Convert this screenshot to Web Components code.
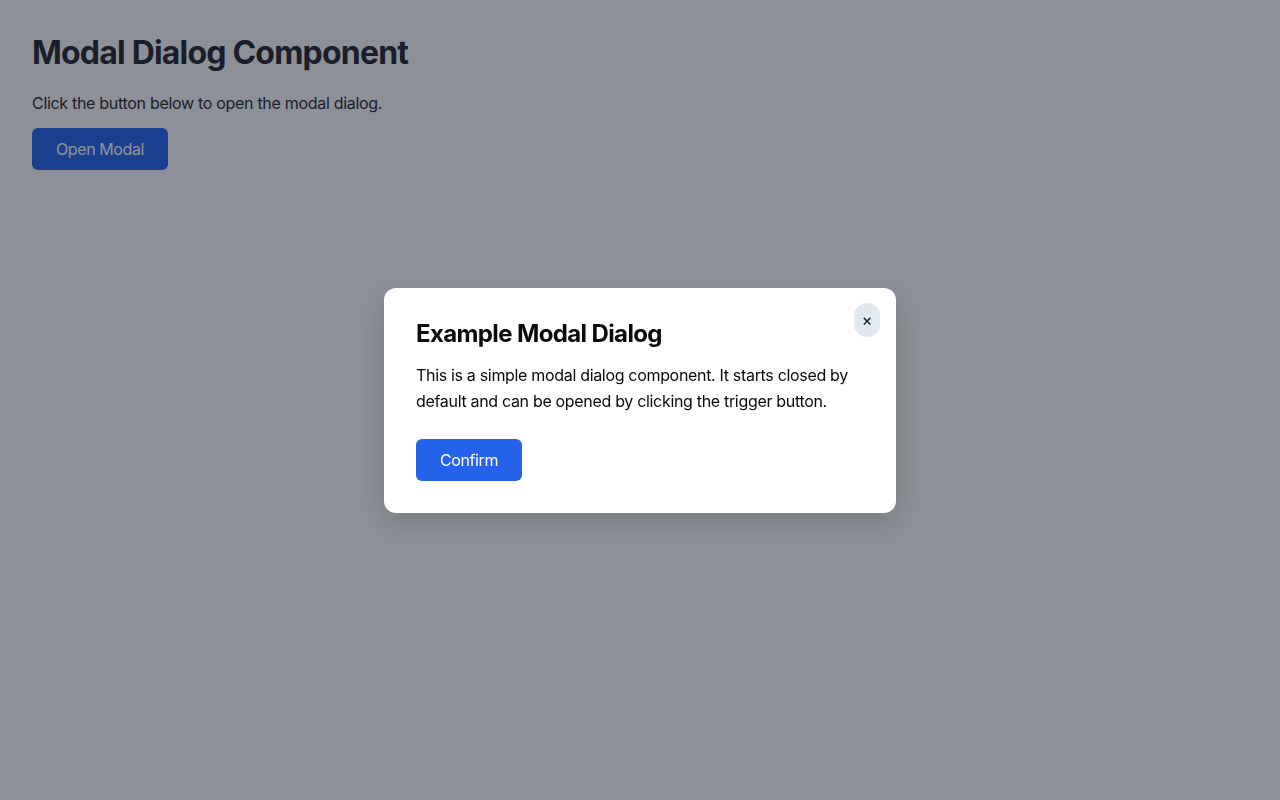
<!DOCTYPE html>
<html lang="en">
<head>
<meta charset="utf-8">
<title>Modal Dialog Component</title>
<style>
  html, body { margin: 0; height: 100%; }
  body {
    background: #f9fafb;
    color: #22242e;
    font-family: Inter, "Liberation Sans", sans-serif;
  }
</style>
</head>
<body>
<demo-page>
  <span slot="title">Modal Dialog Component</span>
  <span slot="intro">Click the button below to open the modal dialog.</span>
  <modal-dialog open>
    <span slot="trigger">Open Modal</span>
    <span slot="title">Example Modal Dialog</span>
    This is a simple modal dialog component. It starts closed by default and can be opened by clicking the trigger button.
    <span slot="action">Confirm</span>
  </modal-dialog>
</demo-page>

<script>
const buttonStyles = /* html */`
<style>
  button.primary {
    background: #2563eb;
    border: 0;
    border-radius: 6px;
    color: #fff;
    cursor: pointer;
    display: block;
    font: 400 16px/24px Inter, "Liberation Sans", sans-serif;
    letter-spacing: -0.025em;
    padding: 9px 24px;
  }
</style>
`

class DemoPage extends HTMLElement {
  constructor () {
    super()
    this.attachShadow({ mode: 'open' })
  }

  connectedCallback () {
    this.shadowRoot.innerHTML = /* html */`
    <style>
      :host {
        display: block;
        padding: 32px;
      }
      h1 {
        font-size: 32px;
        font-weight: 700;
        letter-spacing: -0.025em;
        line-height: 41px;
        margin: 0 0 18px;
      }
      p {
        font-size: 16px;
        letter-spacing: -0.019em;
        line-height: 24px;
        margin: 0 0 13px;
      }
    </style>
    <h1><slot name="title"></slot></h1>
    <p><slot name="intro"></slot></p>
    <slot></slot>
  `
  }
}

class ModalDialog extends HTMLElement {
  constructor () {
    super()
    this.attachShadow({ mode: 'open' })
  }

  connectedCallback () {
    this.shadowRoot.innerHTML = /* html */`
    ${buttonStyles}
    <style>
      :host { display: block; }
      .overlay {
        align-items: center;
        background: rgba(17, 24, 39, 0.465);
        display: none;
        inset: 0;
        justify-content: center;
        position: fixed;
      }
      :host([open]) .overlay { display: flex; }
      .dialog {
        background: #fff;
        border-radius: 12px;
        box-shadow: 0 10px 25px rgba(0, 0, 0, 0.14);
        box-sizing: border-box;
        color: #0a0a0a;
        padding: 32px;
        position: relative;
        width: 512px;
      }
      h2 {
        font-size: 24px;
        font-weight: 700;
        letter-spacing: -0.026em;
        line-height: 28px;
        margin: 0 0 14px;
      }
      .body {
        font-size: 16px;
        letter-spacing: -0.02em;
        line-height: 26px;
        margin: 0 0 25px;
      }
      .close {
        background: #e2e8f0;
        border: 0;
        border-radius: 16px;
        color: #1e293b;
        cursor: pointer;
        font: 500 16px/24px Inter, "Liberation Sans", sans-serif;
        height: 34px;
        padding: 0;
        position: absolute;
        right: 16px;
        top: 15px;
        width: 26px;
      }
    </style>
    <button class="primary" id="trigger"><slot name="trigger"></slot></button>
    <div class="overlay">
      <div class="dialog" role="dialog" aria-modal="true">
        <button class="close" aria-label="Close">×</button>
        <h2><slot name="title"></slot></h2>
        <div class="body"><slot></slot></div>
        <button class="primary"><slot name="action"></slot></button>
      </div>
    </div>
  `
    this.shadowRoot.querySelector('#trigger').addEventListener('click', () => this.setAttribute('open', ''))
    this.shadowRoot.querySelector('.close').addEventListener('click', () => this.removeAttribute('open'))
  }
}

window.customElements.define('demo-page', DemoPage)
window.customElements.define('modal-dialog', ModalDialog)
</script>
</body>
</html>
